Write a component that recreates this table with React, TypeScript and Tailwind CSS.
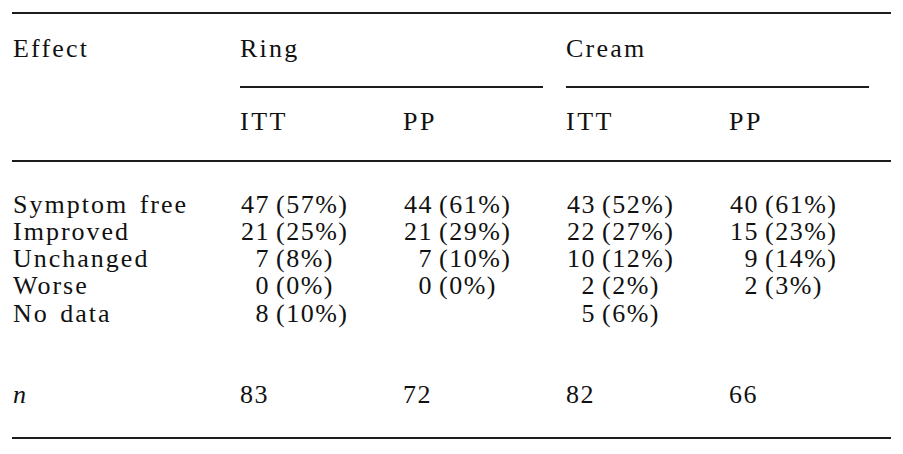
import React from "react";

type Cell = [string, string] | null;

const rows: { label: string; cells: Cell[] }[] = [
  { label: "Symptom free", cells: [["47", "57%"], ["44", "61%"], ["43", "52%"], ["40", "61%"]] },
  { label: "Improved", cells: [["21", "25%"], ["21", "29%"], ["22", "27%"], ["15", "23%"]] },
  { label: "Unchanged", cells: [["7", "8%"], ["7", "10%"], ["10", "12%"], ["9", "14%"]] },
  { label: "Worse", cells: [["0", "0%"], ["0", "0%"], ["2", "2%"], ["2", "3%"]] },
  { label: "No data", cells: [["8", "10%"], null, ["5", "6%"], null] },
];

const totals = ["83", "72", "82", "66"];

const cols = "grid grid-cols-[228px_163px_163px_163px_162px]";

function Rule({ className = "" }: { className?: string }) {
  return <div className={`h-[2px] bg-[#1c1c1c] ${className}`} />;
}

function Count({ cell }: { cell: Cell }) {
  if (!cell) return <div />;
  return (
    <div className="flex whitespace-nowrap">
      <span className="inline-block w-[30px] text-right">{cell[0]}</span>
      <span className="ml-[6px]">({cell[1]})</span>
    </div>
  );
}

export default function App() {
  return (
    <div
      className="w-[903px] h-[454px] bg-white pt-[12px] pl-[12px] text-[#111] text-[26px] tracking-[1.5px]"
      style={{ fontFamily: '"Liberation Serif", "Times New Roman", serif' }}
    >
      <div className="w-[879px]">
        <Rule />

        <div className={`${cols} mt-[20.6px] leading-[27.3px] tracking-[2.2px]`}>
          <div className="pl-[1px]">Effect</div>
          <div className="col-span-2">Ring</div>
          <div className="col-span-2">Cream</div>
        </div>

        <div className={`${cols} mt-[24.1px]`}>
          <div />
          <div className="col-span-2 pr-[23px]">
            <Rule />
          </div>
          <div className="col-span-2 pr-[22px]">
            <Rule />
          </div>
        </div>

        <div className={`${cols} mt-[19.6px] leading-[27.3px] tracking-[2.5px]`}>
          <div />
          <div>ITT</div>
          <div>PP</div>
          <div>ITT</div>
          <div>PP</div>
        </div>

        <Rule className="mt-[25.1px]" />

        <div className="mt-[28.6px] leading-[27.3px]">
          {rows.map((r) => (
            <div key={r.label} className={cols}>
              <div className="pl-[1px] whitespace-nowrap tracking-[2px] [word-spacing:3px]">{r.label}</div>
              {r.cells.map((c, i) => (
                <Count key={i} cell={c} />
              ))}
            </div>
          ))}
        </div>

        <div className={`${cols} mt-[53.5px] leading-[27.3px]`}>
          <div className="pl-[1px] italic">n</div>
          {totals.map((t) => (
            <div key={t}>{t}</div>
          ))}
        </div>

        <Rule className="mt-[29.1px]" />
      </div>
    </div>
  );
}
